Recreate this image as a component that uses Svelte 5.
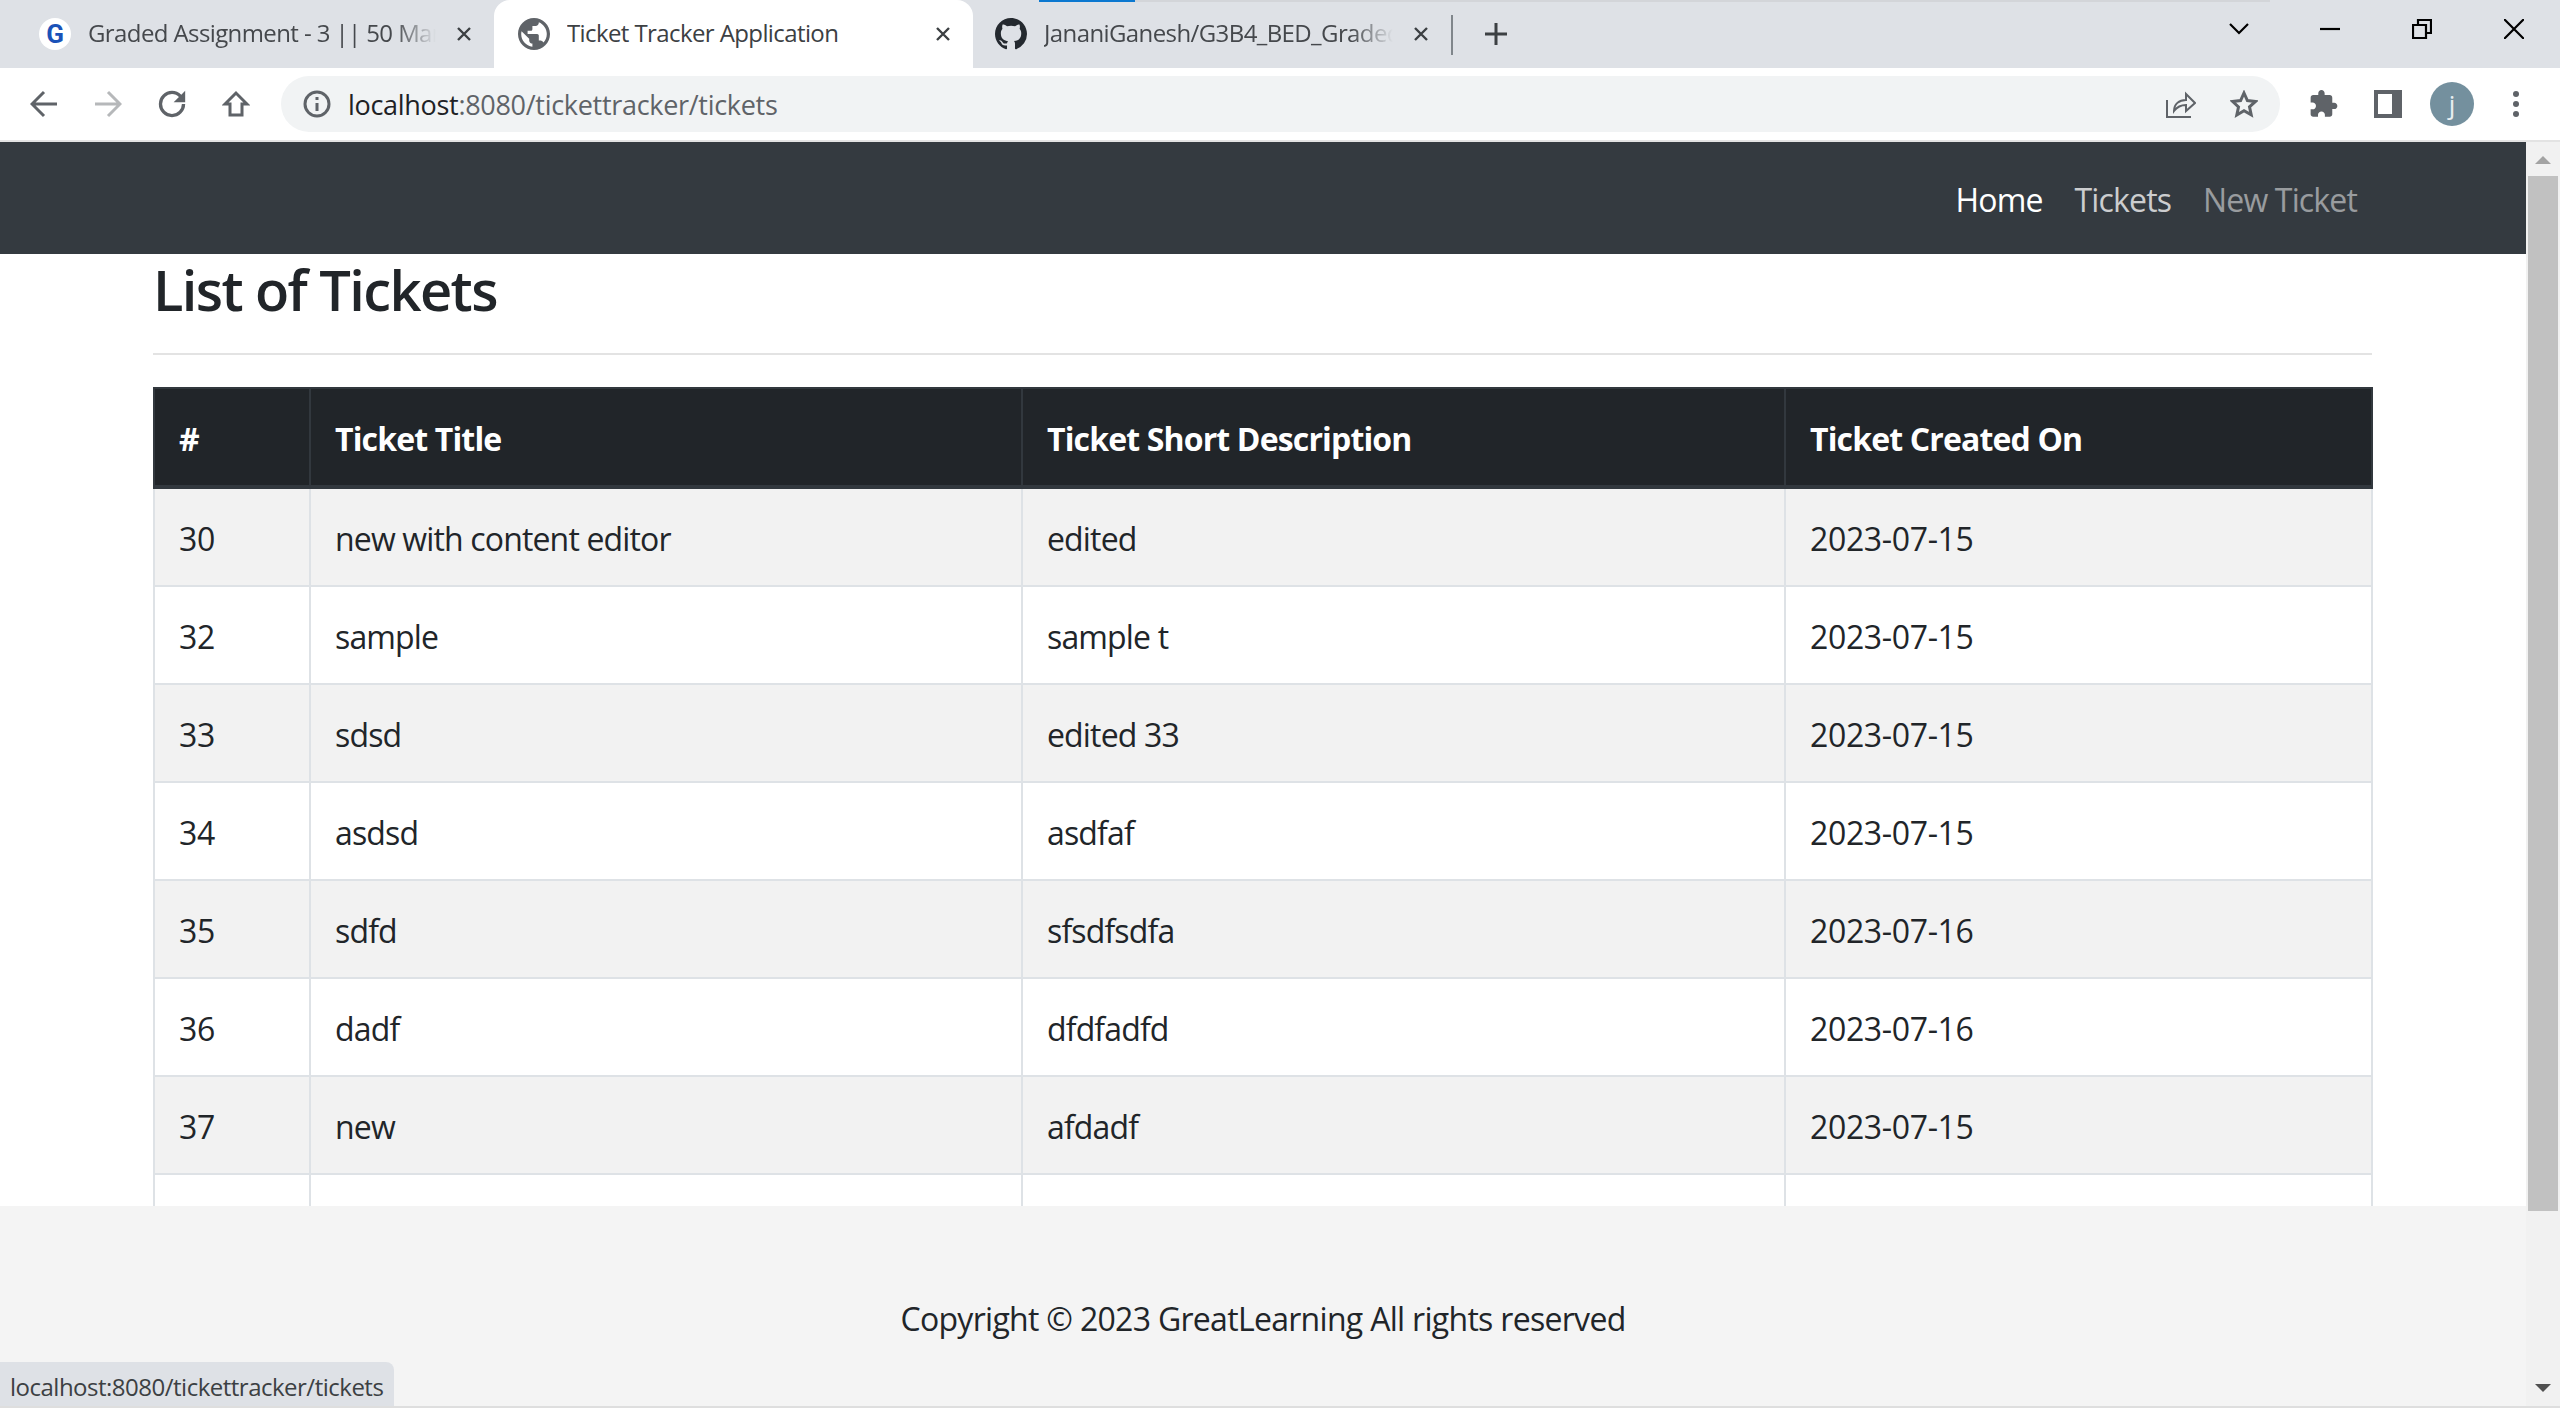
<script>
	const tickets = [
		{ id: 30, title: 'new with content editor', desc: 'edited', created: '2023-07-15' },
		{ id: 32, title: 'sample', desc: 'sample t', created: '2023-07-15' },
		{ id: 33, title: 'sdsd', desc: 'edited 33', created: '2023-07-15' },
		{ id: 34, title: 'asdsd', desc: 'asdfaf', created: '2023-07-15' },
		{ id: 35, title: 'sdfd', desc: 'sfsdfsdfa', created: '2023-07-16' },
		{ id: 36, title: 'dadf', desc: 'dfdfadfd', created: '2023-07-16' },
		{ id: 37, title: 'new', desc: 'afdadf', created: '2023-07-15' }
	];
</script>

<div class="window">
	<div class="tabstrip">
		<div class="progress"><span></span></div>
		<div class="tab first">
			<span class="fav-g">G</span>
			<span class="title">Graded Assignment - 3 || 50 Marks</span>
			<svg class="x" viewBox="0 0 16 16"><path d="M2 2l12 12M14 2L2 14" /></svg>
		</div>
		<div class="tab active">
			<svg class="fav" viewBox="2 2 20 20"><path fill="#5f6368" d="M12 2C6.48 2 2 6.48 2 12s4.48 10 10 10 10-4.48 10-10S17.52 2 12 2zm-1 17.93c-3.95-.49-7-3.85-7-7.93 0-.62.08-1.21.21-1.79L9 15v1c0 1.1.9 2 2 2v1.93zm6.9-2.54c-.26-.81-1-1.39-1.9-1.39h-1v-3c0-.55-.45-1-1-1H8v-2h2c.55 0 1-.45 1-1V7h2c1.1 0 2-.9 2-2v-.41c2.93 1.19 5 4.06 5 7.41 0 2.08-.8 3.97-2.1 5.39z" /></svg>
			<span class="title">Ticket Tracker Application</span>
			<svg class="x" viewBox="0 0 16 16"><path d="M2 2l12 12M14 2L2 14" /></svg>
		</div>
		<div class="tab last">
			<svg class="fav" viewBox="0 0 16 16"><path fill="#24292f" d="M8 0C3.58 0 0 3.58 0 8c0 3.54 2.29 6.53 5.47 7.59.4.07.55-.17.55-.38 0-.19-.01-.82-.01-1.49-2.01.37-2.53-.49-2.69-.94-.09-.23-.48-.94-.82-1.13-.28-.15-.68-.52-.01-.53.63-.01 1.08.58 1.23.82.72 1.21 1.87.87 2.33.66.07-.52.28-.87.51-1.07-1.78-.2-3.64-.89-3.64-3.95 0-.87.31-1.59.82-2.15-.08-.2-.36-1.02.08-2.12 0 0 .67-.21 2.2.82.64-.18 1.32-.27 2-.27s1.36.09 2 .27c1.53-1.04 2.2-.82 2.2-.82.44 1.1.16 1.92.08 2.12.51.56.82 1.27.82 2.15 0 3.07-1.87 3.75-3.65 3.95.29.25.54.73.54 1.48 0 1.07-.01 1.93-.01 2.2 0 .21.15.46.55.38A8.01 8.01 0 0016 8c0-4.42-3.58-8-8-8z" /></svg>
			<span class="title">JananiGanesh/G3B4_BED_Graded_Assignment</span>
			<svg class="x" viewBox="0 0 16 16"><path d="M2 2l12 12M14 2L2 14" /></svg>
		</div>
		<div class="tab-sep"></div>
		<svg class="plus" viewBox="0 0 24 24"><path d="M12 1v22M1 12h22" /></svg>
		<div class="win-controls">
			<svg class="win chev" viewBox="0 0 20 12"><path d="M1 1l9 9 9-9" /></svg>
			<svg class="win min" viewBox="0 0 20 20"><path d="M0 10h20" /></svg>
			<svg class="win restore" viewBox="0 0 20 20"><path d="M1 6h13v13H1zM6 6V1h13v13h-5" /></svg>
			<svg class="win close" viewBox="0 0 20 20"><path d="M0 0l20 20M20 0L0 20" /></svg>
		</div>
	</div>

	<div class="toolbar">
		<div class="nav-icons">
			<svg class="tb" viewBox="0 0 28 28"><path class="ln" d="M27 14H3M14 2L2 14l12 12" /></svg>
			<svg class="tb faded" viewBox="0 0 28 28"><path class="ln" d="M1 14h24M14 2l12 12-12 12" /></svg>
			<svg class="tb" viewBox="3.500 3.500 17 17"><path fill="#5f6368" d="M17.65 6.350A7.960 7.960 0 0012 4a8 8 0 108 8h-2a6 6 0 11-6-6c1.660 0 3.140.69 4.220 1.780L13 11h7V4l-2.350 2.350z" /></svg>
			<svg class="tb" viewBox="0 0 28 28"><path class="ln" d="M14 3L3 14h5v11h12V14h5z" /></svg>
		</div>
		<div class="omnibox">
			<svg class="info" viewBox="0 0 28 28"><circle cx="14" cy="14" r="12" class="ln" /><path class="ln" d="M14 13v8M14 7v3" /></svg>
			<span class="url"><b>localhost</b>:8080/tickettracker/tickets</span>
			<svg class="omni-share" viewBox="0 0 30 28"><path class="thin" d="M1 10v17h24M8 21c0-7 5-11 12-11V4l9 9-9 8v-6c-5 0-9 2-12 6z" /></svg>
			<svg class="omni-star" viewBox="0 0 28 28"><path class="ln" d="M14 3l3.4 7.5 8.1.9-6 5.5 1.7 8L14 20.8 6.800 25l1.700-8-6-5.600 8.100-.9z" /></svg>
		</div>
		<div class="ext-icons">
			<svg class="tb" viewBox="1.500 1 22 22"><path fill="#5f6368" d="M20.5 11H19V7c0-1.100-.9-2-2-2h-4V3.500C13 2.120 11.880 1 10.500 1S8 2.120 8 3.500V5H4c-1.100 0-1.990.9-1.990 2v3.800H3.500c1.490 0 2.700 1.210 2.700 2.700s-1.210 2.700-2.700 2.700H2V20c0 1.100.9 2 2 2h3.800v-1.500c0-1.490 1.210-2.700 2.700-2.700 1.490 0 2.700 1.210 2.700 2.700V22H17c1.100 0 2-.9 2-2v-4h1.500c1.380 0 2.500-1.120 2.500-2.500S21.880 11 20.500 11z" /></svg>
			<svg class="tb" viewBox="0 0 28 28"><path fill="#5f6368" fill-rule="evenodd" d="M0 0h28v28H0zM4 4v20h14V4z" /></svg>
			<span class="avatar">j</span>
			<svg class="tb dots" viewBox="0 0 8 28"><circle cx="4" cy="4" r="3" /><circle cx="4" cy="14" r="3" /><circle cx="4" cy="24" r="3" /></svg>
		</div>
	</div>

	<div class="viewport">
		<div class="page">
			<nav class="navbar">
				<a class="nav-link bright" href="#home">Home</a>
				<a class="nav-link" href="#tickets">Tickets</a>
				<a class="nav-link dim" href="#new">New Ticket</a>
			</nav>
			<main class="content">
				<h2>List of Tickets</h2>
				<hr />
				<table>
					<colgroup>
						<col style="width: 156px" />
						<col style="width: 712px" />
						<col style="width: 763px" />
						<col style="width: 587px" />
					</colgroup>
					<thead>
						<tr>
							<th>#</th>
							<th>Ticket Title</th>
							<th>Ticket Short Description</th>
							<th>Ticket Created On</th>
						</tr>
					</thead>
					<tbody>
						{#each tickets as t}
							<tr>
								<td class="num">{t.id}</td>
								<td>{t.title}</td>
								<td>{t.desc}</td>
								<td class="num">{t.created}</td>
							</tr>
						{/each}
						<tr>
							<td>&nbsp;</td>
							<td></td>
							<td></td>
							<td></td>
						</tr>
					</tbody>
				</table>
			</main>
			<footer class="footer">Copyright © 2023 GreatLearning All rights reserved</footer>
			<div class="status">localhost:8080/tickettracker/tickets</div>
		</div>
		<div class="scrollbar">
			<div class="arrow up"></div>
			<div class="thumb"></div>
			<div class="spacer"></div>
			<div class="arrow down"></div>
		</div>
	</div>
	<div class="bottom-line"></div>
</div>

<style>
	:global(body) {
		margin: 0;
		background: #fff;
		overflow: hidden;
	}

	.window {
		width: 2560px;
		height: 1410px;
		display: flex;
		flex-direction: column;
		overflow: hidden;
		font-family: 'Open Sans', 'Noto Sans', sans-serif;
		color: #212529;
	}

	.tabstrip {
		position: relative;
		flex: 0 0 68px;
		display: flex;
		background: #dee1e6;
	}

	.progress {
		position: absolute;
		left: 1039px;
		top: 0;
		width: 1231px;
		height: 2px;
		background: #d3d5d9;
	}

	.progress span {
		display: block;
		width: 96px;
		height: 2px;
		background: #0b78d0;
	}

	.tab {
		display: flex;
		align-items: center;
		box-sizing: border-box;
		height: 68px;
		font-size: 24px;
		letter-spacing: -0.6px;
		color: #45484c;
	}

	.tab.first {
		width: 494px;
		padding-left: 39px;
	}

	.tab.active {
		width: 479px;
		padding-left: 24px;
		background: #fff;
		border-radius: 16px 16px 0 0;
		color: #3c4043;
	}

	.tab.last {
		width: 478px;
		padding-left: 22px;
	}

	.fav-g {
		flex: none;
		width: 32px;
		height: 32px;
		border-radius: 50%;
		background: #fff;
		color: #1a52b8;
		font-family: 'Roboto', sans-serif;
		font-weight: 700;
		font-size: 26px;
		line-height: 32px;
		text-align: center;
		letter-spacing: 0;
	}

	.fav {
		flex: none;
		width: 32px;
		height: 32px;
	}

	.title {
		flex: 1;
		min-width: 0;
		overflow: hidden;
		white-space: nowrap;
		margin: -2px 0 0 17px;
		line-height: 36px;
		-webkit-mask-image: linear-gradient(to right, #000 88%, transparent 100%);
		mask-image: linear-gradient(to right, #000 88%, transparent 100%);
	}

	.tab.active .title {
		-webkit-mask-image: none;
		mask-image: none;
	}

	.x {
		flex: none;
		width: 16px;
		height: 16px;
		margin: 0 22px 0 20px;
		fill: none;
		stroke: #3c4043;
		stroke-width: 2.4;
	}

	.tab-sep {
		flex: none;
		width: 2px;
		height: 40px;
		margin-top: 15px;
		background: #80868b;
	}

	.plus {
		flex: none;
		width: 24px;
		height: 24px;
		margin: 22px 0 0 31px;
		fill: none;
		stroke: #3c4043;
		stroke-width: 3;
	}

	.win-controls {
		margin-left: auto;
		display: flex;
		align-items: center;
		height: 58px;
		padding-right: 36px;
	}

	.win {
		flex: none;
		fill: none;
		stroke: #000;
		stroke-width: 2.2;
	}

	.chev {
		width: 20px;
		height: 12px;
		margin-right: 71px;
	}

	.min {
		width: 20px;
		height: 20px;
		margin-right: 72px;
	}

	.restore {
		width: 20px;
		height: 20px;
		margin-right: 72px;
	}

	.close {
		width: 20px;
		height: 20px;
	}

	.toolbar {
		flex: 0 0 72px;
		display: flex;
		align-items: center;
		background: #fff;
		border-bottom: 2px solid #e3e3e3;
	}

	.nav-icons,
	.ext-icons {
		flex: none;
		display: flex;
		align-items: center;
	}

	.nav-icons {
		padding-left: 30px;
		gap: 36px;
	}

	.tb {
		flex: none;
		width: 28px;
		height: 28px;
	}

	.faded {
		opacity: 0.45;
	}

	.ln {
		fill: none;
		stroke: #5f6368;
		stroke-width: 3;
	}

	.thin {
		fill: none;
		stroke: #5f6368;
		stroke-width: 2;
	}

	.omnibox {
		flex: none;
		box-sizing: border-box;
		width: 1999px;
		height: 56px;
		margin-left: 31px;
		display: flex;
		align-items: center;
		padding: 0 22px;
		background: #f1f3f4;
		border-radius: 28px;
	}

	.info {
		flex: none;
		width: 28px;
		height: 28px;
	}

	.url {
		flex: 1;
		margin-left: 17px;
		font-size: 27px;
		letter-spacing: -0.3px;
		color: #5f6368;
		white-space: nowrap;
	}

	.url b {
		font-weight: 400;
		color: #202124;
	}

	.omni-share {
		flex: none;
		width: 30px;
		height: 28px;
	}

	.omni-star {
		flex: none;
		width: 28px;
		height: 28px;
		margin-left: 34px;
	}

	.ext-icons {
		padding-left: 30px;
		gap: 36px;
	}

	.avatar {
		flex: none;
		width: 44px;
		height: 44px;
		margin: 0 -8px;
		border-radius: 50%;
		background: #74909e;
		color: #e8eef0;
		font-size: 26px;
		line-height: 44px;
		text-align: center;
	}

	.dots {
		width: 8px;
		margin-left: 10px;
		fill: #5f6368;
	}

	.viewport {
		flex: 0 0 1264px;
		display: flex;
		min-height: 0;
	}

	.page {
		position: relative;
		flex: 0 0 2526px;
		display: flex;
		flex-direction: column;
		min-height: 0;
		overflow: hidden;
	}

	.navbar {
		flex: 0 0 112px;
		box-sizing: border-box;
		display: flex;
		justify-content: flex-end;
		align-items: center;
		padding: 2px 153px 0 0;
		background: #343a40;
	}

	.nav-link {
		padding: 0 16px;
		font-size: 32px;
		letter-spacing: -0.85px;
		text-decoration: none;
		color: rgba(255, 255, 255, 0.75);
	}

	.bright {
		color: #fff;
	}

	.dim {
		color: rgba(255, 255, 255, 0.5);
	}

	.content {
		flex: 1;
		min-height: 0;
		overflow: hidden;
		padding: 0 154px 0 153px;
		background: #fff;
	}

	h2 {
		margin: 0;
		padding-top: 3px;
		font-size: 56px;
		font-weight: 600;
		line-height: 64px;
		letter-spacing: -1.6px;
		color: #212529;
	}

	hr {
		margin: 32px 0;
		border: 0;
		height: 2px;
		background: #e3e3e3;
	}

	table {
		width: 2218px;
		table-layout: fixed;
		border-collapse: collapse;
		font-size: 32px;
		line-height: 48px;
		letter-spacing: -0.85px;
	}

	th,
	td {
		padding: 26px 24px 22px;
		text-align: left;
		white-space: nowrap;
		border: 2px solid #dee2e6;
	}

	td.num {
		letter-spacing: -0.35px;
	}

	th {
		background: #212529;
		color: #fff;
		font-weight: 700;
		border-color: #32383e;
		border-bottom-width: 4px;
	}

	tbody tr:nth-child(odd) {
		background: #f2f2f2;
	}

	.footer {
		flex: 0 0 200px;
		box-sizing: border-box;
		display: flex;
		align-items: center;
		justify-content: center;
		padding-top: 24px;
		background: #f4f4f4;
		font-size: 32px;
		letter-spacing: -0.7px;
		color: #212529;
	}

	.status {
		position: absolute;
		left: 0;
		bottom: 0;
		box-sizing: border-box;
		width: 394px;
		height: 44px;
		padding: 3px 0 0 10px;
		background: #dee1e6;
		border-radius: 0 8px 0 0;
		font-size: 24px;
		line-height: 44px;
		letter-spacing: -0.5px;
		color: #3c4043;
		white-space: nowrap;
		overflow: hidden;
	}

	.scrollbar {
		flex: 0 0 34px;
		display: flex;
		flex-direction: column;
		align-items: center;
		background: #f1f1f1;
	}

	.arrow {
		flex: none;
		width: 0;
		height: 0;
		border-left: 8px solid transparent;
		border-right: 8px solid transparent;
	}

	.arrow.up {
		margin-top: 14px;
		border-bottom: 8px solid #a3a3a3;
	}

	.arrow.down {
		margin-bottom: 14px;
		border-top: 8px solid #505050;
	}

	.thumb {
		flex: none;
		width: 30px;
		height: 1035px;
		margin-top: 12px;
		background: #c1c1c1;
	}

	.spacer {
		flex: 1;
	}

	.bottom-line {
		flex: 0 0 2px;
		background: #dedede;
	}
</style>
